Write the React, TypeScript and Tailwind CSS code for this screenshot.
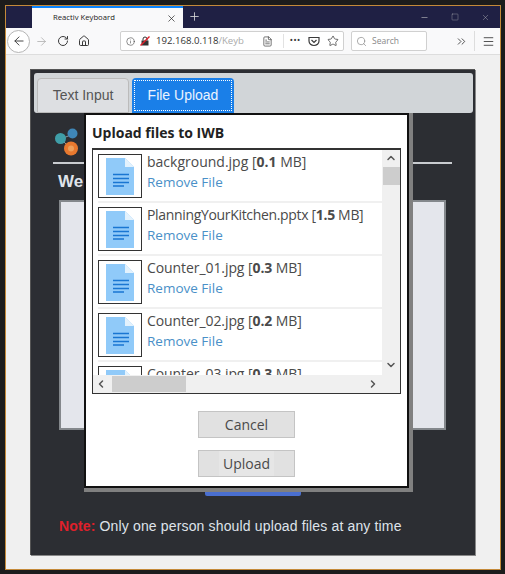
import { ArrowLeft, ArrowRight, RotateCw, Home, Info, FileText, Star, Search, ChevronsRight, Menu, Plus, X, Minus, Square, ChevronUp, ChevronDown, ChevronLeft, ChevronRight } from 'lucide-react';

const files = [
  { name: 'background.jpg', size: '0.1', nameClass: 'tracking-[0px]' },
  { name: 'PlanningYourKitchen.pptx', size: '1.5', nameClass: 'tracking-[-0.33px]' },
  { name: 'Counter_01.jpg', size: '0.3', nameClass: 'tracking-[-0.08px]' },
  { name: 'Counter_02.jpg', size: '0.2', nameClass: 'tracking-[-0.08px]' },
  { name: 'Counter_03.jpg', size: '0.3', nameClass: 'tracking-[-0.08px]' },
];

function FileIcon() {
  return (
    <svg width="28" height="37" viewBox="0 0 28 37">
      <path d="M0 0H19L28 9V37H0Z" fill="#90caf9" />
      <path d="M19 0L28 9H19Z" fill="#e3f2fd" />
      <path d="M7 16.5H23M7 20.5H23M7 24.5H23M7 28H18" stroke="#1976d2" strokeWidth="1.5" />
    </svg>
  );
}

function Logo() {
  return (
    <svg width="26" height="30" viewBox="0 0 26 30">
      <path d="M6 11L18 6M7 12L16 21" stroke="#8a9aa5" strokeWidth="1" />
      <circle cx="5.5" cy="10.5" r="5.5" fill="#3f9ea8" />
      <circle cx="17.5" cy="5.5" r="5" fill="#3f87b8" />
      <circle cx="16" cy="20.5" r="7" fill="#e8792f" />
      <circle cx="16" cy="20.5" r="3" fill="#eda05c" />
    </svg>
  );
}

function InsecureLock() {
  return (
    <svg width="10" height="10" viewBox="0 0 10 10" className="ml-[5px] shrink-0">
      <path d="M3 4.5V3A2 2 0 0 1 7 3V4.5" fill="none" stroke="#333" strokeWidth="1" />
      <rect x="1.5" y="4.5" width="7" height="5" fill="#333" />
      <path d="M0.5 9.5L9.5 0.5" stroke="#e0202a" strokeWidth="1.4" />
    </svg>
  );
}

export default function App() {
  return (
    <div className="w-[505px] h-[574px] overflow-hidden bg-[#1c1c1c] pt-[5px] px-[5px] font-['Liberation_Sans',sans-serif]">
      <div className="w-[496px] h-[565px] border border-[#c48a3a] flex flex-col bg-[#f0f0f0]">
        {/* title bar */}
        <div className="h-[22px] shrink-0 bg-[#1f2044] flex items-stretch pl-[26px] text-white">
          <div className="w-[151px] bg-[#f9f9fa] border-t-2 border-[#0a84ff] flex items-center pl-[21px] pr-[6px] text-[#222] text-[7.7px] font-['Open_Sans',sans-serif]">
            <span className="flex-1">Reactiv Keyboard</span>
            <X size={11} strokeWidth={1.5} />
          </div>
          <Plus size={13} strokeWidth={1.5} className="ml-[5px] mt-[4px] text-[#ddd]" />
          <div className="ml-auto flex items-center gap-[22px] pr-[10px] text-[#ccc]">
            <Minus size={9} strokeWidth={1.5} />
            <Square size={8} strokeWidth={1} />
            <X size={9} strokeWidth={1} />
          </div>
        </div>
        {/* toolbar */}
        <div className="h-[27px] shrink-0 bg-[#f9f9fa] border-b border-[#ddd] flex items-center pl-[1px] text-[#3a3a3a] [&>*]:shrink-0">
          <div className="w-[23px] h-[23px] rounded-full border border-[#b5b5b5] bg-white flex items-center justify-center">
            <ArrowLeft size={14} strokeWidth={1.6} />
          </div>
          <ArrowRight size={13} strokeWidth={1.4} className="ml-[5px] text-[#aaa]" />
          <RotateCw size={12} strokeWidth={2} className="ml-[9px]" />
          <Home size={12} strokeWidth={2} className="ml-[9px]" />
          <div className="ml-[30px] w-[224px] h-[20px] flex items-center bg-white border border-[#d0d0d0] rounded-[2px] pl-[5px] pr-[4px] font-['Open_Sans',sans-serif]">
            <Info size={9} strokeWidth={1.5} className="shrink-0" />
            <InsecureLock />
            <span className="ml-[6px] text-[9.6px] text-[#333]">192.168.0.118</span>
            <span className="text-[#aaa] text-[9.6px]">/Keyb</span>
            <FileText size={11} strokeWidth={1.5} className="ml-auto shrink-0" />
            <span className="ml-[10px] pl-[6px] border-l border-[#e2e2e2] text-[7px] font-bold tracking-[1px] leading-[14px]">•••</span>
            <svg width="12" height="11" viewBox="0 0 12 11" className="ml-[7px] shrink-0" fill="none" stroke="currentColor" strokeWidth="1.2">
              <path d="M1 1.5H11V5A5 4.5 0 0 1 1 5Z" />
              <path d="M3.5 4L6 6.5L8.5 4" />
            </svg>
            <Star size={12} strokeWidth={1.5} className="ml-[7px] shrink-0" />
          </div>
          <div className="ml-[7px] w-[76px] h-[20px] flex items-center bg-white border border-[#d0d0d0] rounded-[2px] pl-[4px] text-[8.5px] text-[#888] font-['Open_Sans',sans-serif]">
            <Search size={11} strokeWidth={1.5} />
            <span className="ml-[5px]">Search</span>
          </div>
          <ChevronsRight size={13} strokeWidth={1.6} className="ml-[28px]" />
          <div className="ml-[6px] h-[20px] border-l border-[#ddd]" />
          <Menu size={13} strokeWidth={1.6} className="ml-[7px]" />
        </div>
        {/* page */}
        <div className="flex-1 pt-[14px] pl-[24px] relative">
          <div className="w-[445px] h-[486px] bg-[#2c2e33] border-t border-l border-[#555] shadow-[1px_1px_0_#888] p-[3px] flex flex-col">
            <div className="h-[40px] shrink-0 w-[439px] rounded-[3px] bg-[#d1d5d8] pt-[5px] pl-[3px] flex gap-[3px] text-[14px]">
              <div className="w-[92px] h-[35px] rounded-t-[4px] bg-[#dddfe2] border border-[#bbb] flex items-center justify-center text-[#555]">
                Text Input
              </div>
              <div className="w-[102px] h-[35px] rounded-t-[4px] bg-[#1a7fe8] text-[#eaf3ff] flex items-center justify-center">
                <div className="w-[98px] h-[31px] border border-dotted border-white flex items-center justify-center">File Upload</div>
              </div>
            </div>
            <div className="pt-[15px] pl-[21px] flex">
              <Logo />
              <div className="ml-[3px] mt-[5px] w-[1px] h-[19px] bg-[#8fc4e8]" />
            </div>
            <div className="ml-[19px] mr-[20px] mt-[4px] h-[2px] bg-[#c9ccd0]" />
            <div className="ml-[24px] mt-[7px] font-bold text-[17px] leading-[22px] text-[#dfe3ea]">Welcome</div>
            <div className="ml-[25px] mt-[7px] mr-[26px] h-[230px] bg-[#e4e6ec] border-[2px] border-[#84888c]" />
            <div className="self-center mt-[62px] h-[4px] w-[96px] bg-[#4a6fd0] rounded-b-[2px]" />
            <div className="ml-[25px] mt-[20px] text-[14px] leading-[20px] tracking-[0.15px] text-[#dfe3ea]">
              <span className="font-bold text-[#e0202a]">Note: </span>Only one person should upload files at any time
            </div>
          </div>
          {/* modal */}
          <div className="absolute left-[78px] top-[58px] border-r-4 border-b-4 border-[#808080]">
            <div className="w-[325px] h-[375px] bg-white border-[2px] border-[#111] px-[6px] flex flex-col font-['Open_Sans',sans-serif]">
              <div className="h-[33px] shrink-0 pt-[8px] font-bold text-[14px] leading-[20px] text-[#222]">Upload files to IWB</div>
              <div className="h-[246px] shrink-0 border border-[#333] border-t-2 relative overflow-hidden">
                <div className="pl-[5px] pt-[4px] pr-[18px]">
                  {files.map((file) => (
                    <div key={file.name} className="flex h-[49px] mb-[4px] border-b-2 border-[#f0f0f0]">
                      <div className="w-[44px] h-[44px] shrink-0 border border-[#333] flex items-center justify-center">
                        <FileIcon />
                      </div>
                      <div className="pl-[5px] -mt-[2px] text-[14px] leading-[20px] whitespace-nowrap">
                        <div className={`text-[#4a4a4a] ${file.nameClass}`}>
                          {file.name} [<b>{file.size}</b> MB]
                        </div>
                        <div className="text-[13.5px] text-[#4a90c8]">Remove File</div>
                      </div>
                    </div>
                  ))}
                </div>
                {/* scrollbars */}
                <div className="absolute right-0 top-0 bottom-0 w-[18px] bg-[#f0f0f0] flex flex-col items-center text-[#555]">
                  <ChevronUp size={12} strokeWidth={3} className="mt-[2px]" />
                  <div className="mt-[3px] w-[17px] h-[18px] bg-[#cdcdcd]" />
                  <ChevronDown size={12} strokeWidth={3} className="mt-auto mb-[22px]" />
                </div>
                <div className="absolute left-0 right-[18px] bottom-0 h-[18px] bg-[#f0f0f0] flex items-center text-[#555]">
                  <ChevronLeft size={12} strokeWidth={3} className="ml-[2px]" />
                  <div className="ml-[5px] w-[74px] h-[16px] bg-[#cdcdcd]" />
                  <ChevronRight size={12} strokeWidth={3} className="ml-auto mr-[3px]" />
                </div>
              </div>
              <div className="flex flex-col items-center gap-[12px] pt-[17px] text-[14px] text-[#4a4a4a]">
                <div className="w-[97px] h-[27px] bg-[#e1e1e1] border border-[#c4c4c4] flex items-center justify-center">Cancel</div>
                <div className="w-[97px] h-[27px] bg-[#e1e1e1] border border-[#c4c4c4] flex items-center justify-center">
                  <span className="w-[55px] h-full bg-[#e6e6e6] flex items-center justify-center">Upload</span>
                </div>
              </div>
            </div>
          </div>
        </div>
      </div>
    </div>
  );
}
